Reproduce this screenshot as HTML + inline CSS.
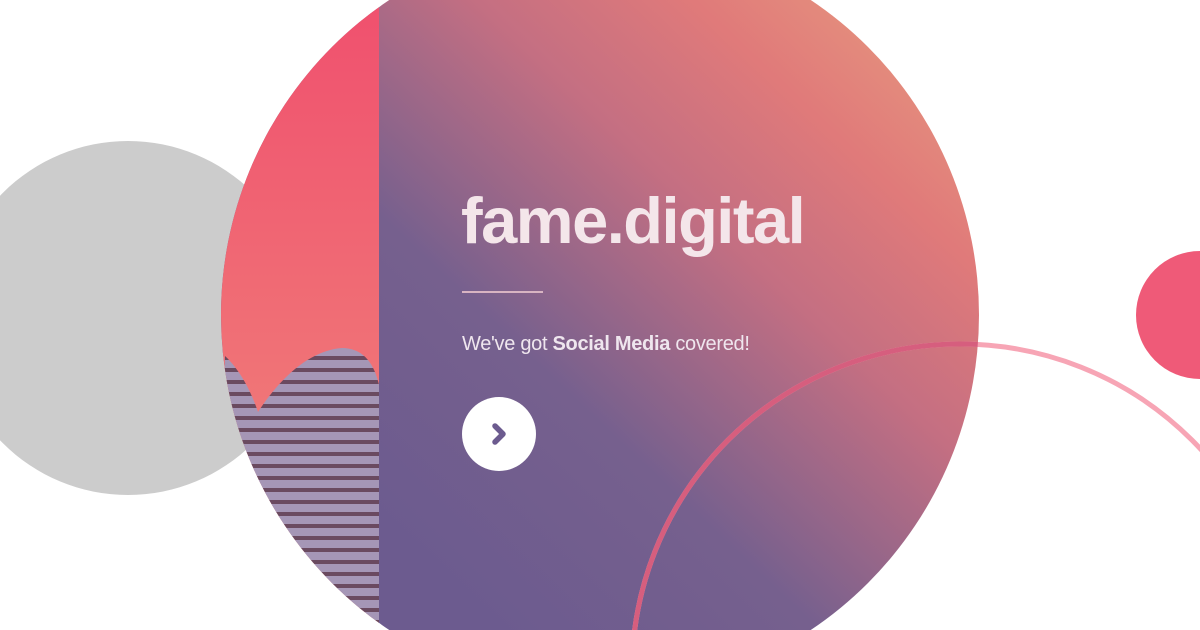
<!DOCTYPE html>
<html><head><meta charset="utf-8"><style>
html,body{margin:0;padding:0;background:#fff;width:1200px;height:630px;overflow:hidden}
svg{display:block}
</style></head><body>
<svg width="1200" height="630" viewBox="0 0 1200 630" xmlns="http://www.w3.org/2000/svg">
<defs>
<clipPath id="c"><circle cx="600" cy="315" r="379"/></clipPath>
<linearGradient id="rg" x1="420" y1="560" x2="930" y2="20" gradientUnits="userSpaceOnUse">
<stop offset="0" stop-color="#6c5b8f"/>
<stop offset="0.3" stop-color="#76608e"/>
<stop offset="0.6" stop-color="#c46f82"/>
<stop offset="0.8" stop-color="#e07a7a"/>
<stop offset="1" stop-color="#e6967e"/>
</linearGradient>
<linearGradient id="lg" x1="0" y1="0" x2="0" y2="1">
<stop offset="0" stop-color="#f0506e"/>
<stop offset="1" stop-color="#f08a7c"/>
</linearGradient>
<pattern id="st" width="10" height="12" patternUnits="userSpaceOnUse">
<rect width="10" height="12" fill="#a596b6"/>
<rect y="8" width="10" height="4" fill="#6a4a60"/>
</pattern>
<clipPath id="bld"><path d="M379 630 L379 385 C374 362 362 348 342 348 C312 350 282 375 258 412 C250 388 238 368 225 356 L220 630 Z"/></clipPath>
</defs>
<circle cx="128" cy="318" r="177" fill="#cccccc"/>
<circle cx="1200" cy="315" r="64" fill="#ef5a78"/>
<g clip-path="url(#c)">
<rect x="0" y="0" width="1200" height="630" fill="url(#rg)"/>
<rect x="220" y="0" width="159" height="630" fill="url(#lg)"/>
<rect x="220" y="340" width="159" height="290" fill="url(#st)" clip-path="url(#bld)"/>
</g>
<circle cx="960" cy="672" r="328" fill="none" stroke="#f7a5b5" stroke-width="5"/>
<g clip-path="url(#c)"><circle cx="960" cy="672" r="328" fill="none" stroke="#d65e7e" stroke-width="5"/></g>
<text x="461" y="243" font-family="Liberation Sans, sans-serif" font-weight="bold" font-size="65" fill="#f4e6ea" letter-spacing="-1.5">fame.digital</text>
<rect x="462" y="291" width="81" height="2" fill="#d8b4c2"/>
<text x="462" y="350" font-family="Liberation Sans, sans-serif" font-size="20" fill="#efe6ee" letter-spacing="-0.3">We've got <tspan font-weight="bold">Social Media</tspan> covered!</text>
<circle cx="499" cy="434" r="37" fill="#fff"/>
<path d="M495 426 L503 434 L495 442" fill="none" stroke="#6c5b8f" stroke-width="5.5" stroke-linecap="round" stroke-linejoin="round"/>
</svg>
</body></html>
